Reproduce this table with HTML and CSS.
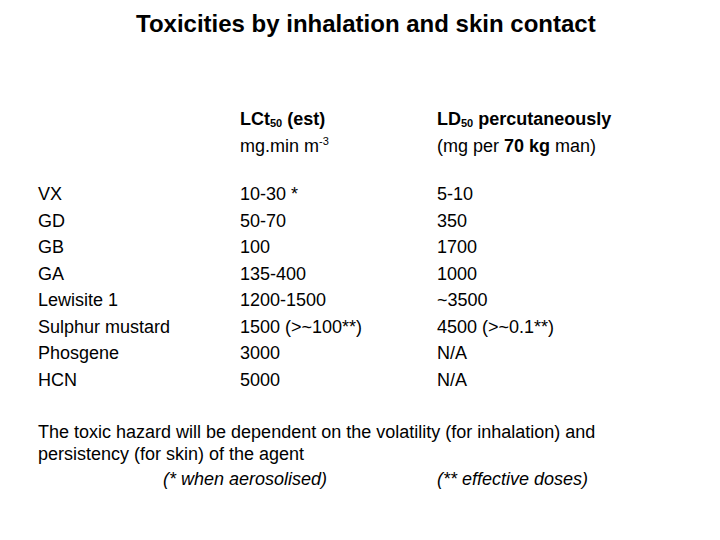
FILE: index.html
```html
<!DOCTYPE html>
<html>
<head>
<meta charset="utf-8">
<link rel="stylesheet" href="styles.css">
</head>
<body>
<div class="slide">
  <h1 class="title">Toxicities by inhalation and skin contact</h1>
  <div class="table">
    <div class="head">
      <div class="cell"></div>
      <div class="cell"><b>LCt<sub>50</sub> (est)</b><br>mg.min m<sup>-3</sup></div>
      <div class="cell"><b>LD<sub>50</sub> percutaneously</b><br>(mg per <b>70 kg</b> man)</div>
    </div>
    <div class="body">
      <div class="col">VX<br>GD<br>GB<br>GA<br>Lewisite 1<br>Sulphur mustard<br>Phosgene<br>HCN</div>
      <div class="col">10-30 *<br>50-70<br>100<br>135-400<br>1200-1500<br>1500 (&gt;~100**)<br>3000<br>5000</div>
      <div class="col">5-10<br>350<br>1700<br>1000<br>~3500<br>4500 (&gt;~0.1**)<br>N/A<br>N/A</div>
    </div>
  </div>
  <p class="note">The toxic hazard will be dependent on the volatility (for inhalation) and persistency (for skin) of the agent</p>
  <div class="foot">
    <span class="f1">(* when aerosolised)</span>
    <span class="f2">(** effective doses)</span>
  </div>
</div>
</body>
</html>
```
FILE: styles.css
```css
html, body {
  margin: 0;
  padding: 0;
  background: #fff;
}
.slide {
  width: 720px;
  height: 540px;
  font-family: "Liberation Sans", Arial, sans-serif;
  color: #000;
  box-sizing: border-box;
  padding: 10px 0 0 38px;
}
.title {
  margin: 0 0 0 98px;
  font-size: 24px;
  font-weight: bold;
  line-height: 28px;
}
.table {
  margin-top: 68px;
  font-size: 18px;
  line-height: 26.5px;
}
.head, .body {
  display: grid;
  grid-template-columns: 202px 197px 1fr;
}
.body {
  margin-top: 22px;
}
sub, sup {
  font-size: 11px;
  line-height: 0;
}
sub { vertical-align: -2px; }
sup { vertical-align: 7px; }
.note {
  margin: 28px 0 0 0;
  width: 600px;
  font-size: 18px;
  line-height: 22px;
}
.foot {
  display: grid;
  grid-template-columns: 399px 1fr;
  margin-top: 3px;
  font-size: 18px;
  line-height: 22px;
  font-style: italic;
}
.f1 { padding-left: 125px; }
```
